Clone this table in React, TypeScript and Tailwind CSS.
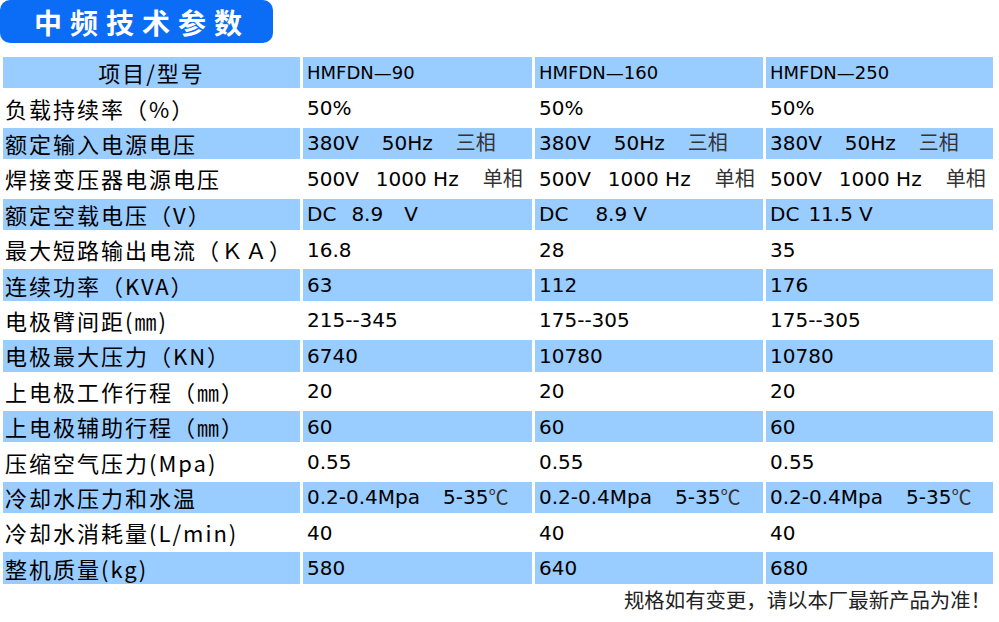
import { Fragment } from "react";

type Seg = { t: string; ml?: number; soft?: boolean; cjk?: boolean };

const LAT = "font-['DejaVu_Sans','Noto_Sans_CJK_SC',sans-serif]";
const CJK = "font-['Noto_Sans_CJK_SC',sans-serif]";

const margins: Record<number, string> = {
  0: "",
  6: "ml-[6px]",
  9: "ml-[9px]",
  15: "ml-[15px]",
  17: "ml-[17px]",
  21: "ml-[21px]",
  23: "ml-[23px]",
  24: "ml-[24px]",
  27: "ml-[27px]",
};

const three = (s: Seg[]) => [s, s, s];
const same = (t: string) => three([{ t }]);

const volts: Seg[] = [
  { t: "380V" },
  { t: "50Hz", ml: 23 },
  { t: "三相", ml: 23, soft: true },
];
const hz: Seg[] = [
  { t: "500V" },
  { t: "1000 Hz", ml: 17 },
  { t: "单相", ml: 24, soft: true },
];
const water: Seg[] = [
  { t: "0.2-0.4Mpa" },
  { t: "5-35", ml: 23 },
  { t: "℃", cjk: true, soft: true },
];

const rows: { label: string; cells: Seg[][] }[] = [
  { label: "负载持续率（%）", cells: same("50%") },
  { label: "额定输入电源电压", cells: three(volts) },
  { label: "焊接变压器电源电压", cells: three(hz) },
  {
    label: "额定空载电压（V）",
    cells: [
      [{ t: "DC" }, { t: "8.9", ml: 15 }, { t: "V", ml: 21 }],
      [{ t: "DC" }, { t: "8.9", ml: 27 }, { t: "V", ml: 6 }],
      [{ t: "DC" }, { t: "11.5", ml: 9 }, { t: "V", ml: 6 }],
    ],
  },
  {
    label: "最大短路输出电流（ＫＡ）",
    cells: [[{ t: "16.8" }], [{ t: "28" }], [{ t: "35" }]],
  },
  { label: "连续功率（KVA）", cells: [[{ t: "63" }], [{ t: "112" }], [{ t: "176" }]] },
  {
    label: "电极臂间距(㎜)",
    cells: [[{ t: "215--345" }], [{ t: "175--305" }], [{ t: "175--305" }]],
  },
  {
    label: "电极最大压力（KN）",
    cells: [[{ t: "6740" }], [{ t: "10780" }], [{ t: "10780" }]],
  },
  { label: "上电极工作行程（㎜）", cells: same("20") },
  { label: "上电极辅助行程（㎜）", cells: same("60") },
  { label: "压缩空气压力(Mpa)", cells: same("0.55") },
  { label: "冷却水压力和水温", cells: three(water) },
  { label: "冷却水消耗量(L/min)", cells: same("40") },
  { label: "整机质量(kg)", cells: [[{ t: "580" }], [{ t: "640" }], [{ t: "680" }]] },
];

const models = ["HMFDN—90", "HMFDN—160", "HMFDN—250"];

const Cell = ({ segs, blue }: { segs: Seg[]; blue: boolean }) => (
  <div
    className={`flex items-center pl-[4px] whitespace-pre text-[20px] text-black ${LAT} ${
      blue ? "bg-[#99ccff]" : "bg-white"
    }`}
  >
    {segs.map((s, i) => (
      <span
        key={i}
        className={`${margins[s.ml ?? 0]} ${s.soft ? "text-[#333]" : ""} ${s.cjk ? CJK : ""}`}
      >
        {s.t}
      </span>
    ))}
  </div>
);

const App = () => {
  return (
    <div className="w-[999px] h-[622px] bg-white overflow-hidden">
      <div className="w-[273px] h-[43px] rounded-[10px] bg-[#0b6cf5] flex items-center pl-[34px]">
        <span className={`text-white font-bold text-[28px] tracking-[8px] ${CJK}`}>
          中频技术参数
        </span>
      </div>

      <div className="mt-[14px] pl-[3px]">
        <div className="grid grid-cols-[297px_229px_228px_227px] gap-x-[3px] gap-y-[4px] auto-rows-[31.4px]">
          <div className="bg-[#99ccff] flex items-center justify-center">
            <span className={`text-[22px] tracking-[2px] text-black ${CJK}`}>项目/型号</span>
          </div>
          {models.map((m) => (
            <div
              key={m}
              className={`bg-[#99ccff] flex items-center pl-[4px] text-[18px] text-black ${LAT}`}
            >
              {m}
            </div>
          ))}

          {rows.map((r, i) => {
            const blue = i % 2 === 1;
            return (
              <Fragment key={r.label}>
                <div
                  className={`flex items-center pl-[2px] whitespace-pre ${
                    blue ? "bg-[#99ccff]" : "bg-white"
                  }`}
                >
                  <span className={`text-[22px] tracking-[2px] text-black ${CJK}`}>
                    {r.label}
                  </span>
                </div>
                {r.cells.map((c, j) => (
                  <Cell key={j} segs={c} blue={blue} />
                ))}
              </Fragment>
            );
          })}
        </div>
      </div>

      <div className="flex justify-end pr-[8px]">
        <span className={`text-[20.4px] text-[#222] ${CJK}`}>
          规格如有变更，请以本厂最新产品为准！
        </span>
      </div>
    </div>
  );
};

export default App;
